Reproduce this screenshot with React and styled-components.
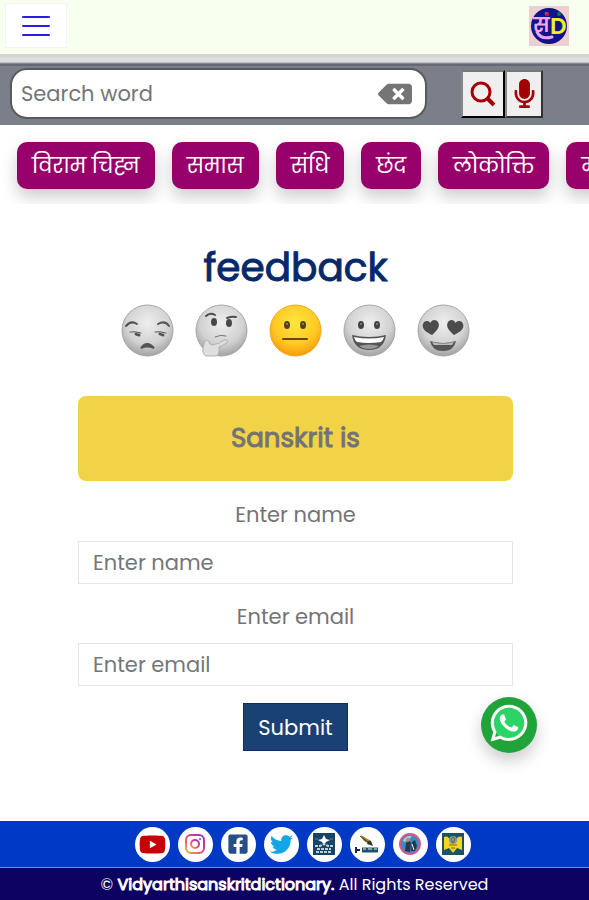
import React, { useState } from 'react'
import styled, { createGlobalStyle } from 'styled-components'
import { FaBackspace, FaMicrophone, FaYoutube, FaFacebookSquare, FaTwitter, FaWhatsapp } from 'react-icons/fa'

const GlobalStyle = createGlobalStyle`
* { box-sizing: border-box; }
body {
  margin: 0;
  background: #fff;
  font-family: Poppins, Inter, "Noto Sans", sans-serif;
  color: #737376;
}
button, input { font-family: inherit; }
`

const Page = styled.div`
display: flex;
flex-direction: column;
min-height: 100vh;
overflow: hidden;
`
const Header = styled.header`
display: flex;
justify-content: space-between;
align-items: flex-start;
height: 54px;
padding: 3px 20px 0 5px;
background: #f7ffee;
`
const MenuButton = styled.button`
display: flex;
align-items: center;
justify-content: center;
width: 62px;
height: 45px;
padding: 0;
border: 1px solid #f3f3f6;
background: #fff;
`
const LogoLink = styled.a`
display: block;
height: 40px;
margin-top: 3px;
`
const HeaderShadow = styled.div`
height: 10px;
background: linear-gradient(#cdd1cc, #dde1e1 50%, #d9dee0 80%, #666a75);
`
const SearchBar = styled.form`
display: flex;
align-items: center;
gap: 34px;
height: 61px;
padding: 0 46px 4px 10px;
background: #7b7f8a;
border-top: 2px solid #666973;
`
const SearchBox = styled.div`
display: flex;
align-items: center;
flex: 1;
min-width: 0;
height: 51px;
padding: 0 13px 0 9px;
border: 2px solid #5a5a5a;
border-radius: 17px;
background: #fff;
`
const SearchInput = styled.input`
flex: 1;
min-width: 0;
padding: 0;
border: 0;
outline: 0;
background: none;
font-size: 21px;
&::placeholder { color: #757575; opacity: 1; }
`
const ClearButton = styled.button`
display: flex;
padding: 0;
border: 0;
background: none;
color: #757575;
`
const SearchButtons = styled.div`
display: flex;
flex: none;
`
const ToolButton = styled.button`
display: flex;
align-items: center;
justify-content: center;
width: ${(props) => (props.$dark ? '44px' : '38px')};
height: 48px;
padding: 0;
border: 2px outset ${(props) => (props.$dark ? '#000' : '#858585')};
border-top-color: #777;
border-left-color: #888;
background: #efefef;
color: #a30008;
`
const Chips = styled.nav`
display: flex;
gap: 17px;
height: 79px;
padding: 17px 17px 0;
overflow: hidden;
`
const Chip = styled.a`
flex: none;
height: 47px;
padding: 0 15px;
border-radius: 10px;
background: #97006a;
box-shadow: 0 8px 16px rgba(0, 0, 0, 0.2);
color: #fff;
font-size: 21px;
line-height: 47px;
text-decoration: none;
white-space: nowrap;
`
const Feedback = styled.main`
display: flex;
flex-direction: column;
align-items: center;
flex: 1;
margin: 0 76px 0 78px;
padding-top: 36px;
`
const Title = styled.h1`
margin: 0;
font-size: 39px;
font-weight: 400;
line-height: 56px;
-webkit-text-stroke: 1px;
color: #05296b;
`
const Faces = styled.div`
display: flex;
gap: 21px;
margin-top: 8px;
`
const FaceButton = styled.button`
display: block;
width: 53px;
height: 53px;
padding: 0;
border: 0;
background: none;
filter: ${(props) => (props.$active ? 'none' : 'grayscale(1)')};
`
const Banner = styled.div`
width: 100%;
margin-top: 39px;
border-radius: 8px;
background: #f2d347;
font-size: 26px;
-webkit-text-stroke: 1px;
line-height: 85px;
text-align: center;
`
const FeedbackForm = styled.form`
display: flex;
flex-direction: column;
align-items: center;
width: 100%;
padding-top: 9px;
`
const Label = styled.label`
padding-top: 9px;
font-size: 21px;
line-height: 32px;
`
const Field = styled.input`
width: 100%;
height: 43px;
margin: 10px 0 8px;
padding: 0 14px;
border: 1px solid #e4e5e7;
outline: 0;
font-size: 21px;
&::placeholder { color: #737679; opacity: 1; }
`
const SubmitButton = styled.button`
height: 48px;
margin-top: 9px;
padding: 0 14px;
border: 1px solid #0c2f6c;
background: #194173;
color: #fff;
font-size: 21px;
`
const WhatsappLink = styled.a`
position: fixed;
right: 52px;
bottom: 147px;
width: 56px;
height: 56px;
border-radius: 50%;
background: #20a43a;
box-shadow: 0 8px 16px rgba(0, 0, 0, 0.2);
`
const Social = styled.div`
display: flex;
justify-content: center;
align-items: center;
gap: 8px;
height: 46px;
margin-left: 16px;
`
const SocialLink = styled.a`
display: flex;
align-items: center;
justify-content: center;
width: 35px;
height: 35px;
border-radius: 50%;
background: #fff;
color: ${(props) => props.$color};
`
const Footer = styled.footer`
background: #0039c6;
`
const Copyright = styled.div`
height: 33px;
border-top: 1px solid #8b7fd0;
background: #0c0061;
color: #fff;
font-size: 16px;
line-height: 33px;
text-align: center;
b { font-weight: 400; -webkit-text-stroke: 1px; }
`

const Logo = () => (
  <svg width="40" height="40" viewBox="0 0 40 40">
    <rect width="40" height="40" fill="#edcfd2" />
    <circle cx="20" cy="20" r="18" fill="#10138a" />
    <path d="M8 26q4 8 15 5" stroke="#e5a5ee" strokeWidth="3" fill="none" strokeLinecap="round" />
    <text x="4" y="26" fontSize="20" fontWeight="600" fill="#f2a6f0">सं</text>
    <text x="21" y="28" fontSize="23" fontWeight="600" fill="#f0ef25">D</text>
    <circle cx="18" cy="8" r="2" fill="#d51d2b" />
    <circle cx="30" cy="8" r="2" fill="#087b3e" />
  </svg>
)

const SearchIcon = () => (
  <svg width="28" height="28" viewBox="0 0 28 28" fill="none" stroke="#a30008">
    <circle cx="12" cy="12" r="9" strokeWidth="3" />
    <path d="M18 18l7 7" strokeWidth="4" />
  </svg>
)

const Heart = ({ x }) => (
  <path transform={`translate(${x} 23) rotate(${x < 26 ? -8 : 8})`} d="M0 8C-4 5-9 2-8-3c1-4 6-5 8-1 2-4 7-3 8 1 1 5-4 8-8 11z" fill="#4b4b4b" />
)

const Eyes = ({ y = 21 }) => (
  <g fill="#50401c">
    <ellipse cx="18" cy={y} rx="3" ry="4" />
    <ellipse cx="34" cy={y} rx="3" ry="4" />
    <circle cx="18" cy={y - 1} r="1" fill="#a58a50" />
    <circle cx="34" cy={y - 1} r="1" fill="#a58a50" />
  </g>
)

const features = {
  unamused: (
    <g fill="none" stroke="#555" strokeWidth="2" strokeLinecap="round">
      <path d="M5 22q5-6 11-2M37 20q7-4 11 2" />
      <path d="M9 28q5-1 11 1M34 28q5-1 11 1" strokeWidth="1" />
      <path d="M15 30q1 1 3 1M39 30q2 1 3 1" strokeWidth="3" />
      <path d="M20 44q6-8 13 0q-7-3-13 0z" fill="#555" />
    </g>
  ),
  thinking: (
    <g>
      <g fill="none" stroke="#4e4e4e" strokeWidth="2" strokeLinecap="round">
        <path d="M11 12q4-4 9-1M32 14q5-2 9-1" />
        <path d="M20 33q6-3 11-1" stroke="#777" strokeWidth="1" />
      </g>
      <g fill="#484848"><ellipse cx="19" cy="18" rx="3" ry="4" /><ellipse cx="34" cy="19" rx="3" ry="4" /></g>
      <path d="M9 40q0-4 3-4q2 0 3 4l2 1q7-1 12-5q5-1 3 3l-8 4q1 9-4 9h-9q-4-2-3-8z" fill="#dedede" stroke="#b0b0b0" />
    </g>
  ),
  neutral: (
    <g><Eyes /><path d="M14 35h24" stroke="#684713" strokeWidth="2" strokeLinecap="round" /></g>
  ),
  grinning: (
    <g>
      <Eyes />
      <path d="M9 31q17 4 34 0q-2 15-17 15T9 31z" fill="#555" />
      <path d="M11 33q15 3 30 0q-1 4-3 5q-12 2-24 0q-2-1-3-5z" fill="#fff" />
      <path d="M16 42q10-3 20 0q-4 3-10 3t-10-3z" fill="#999" />
    </g>
  ),
  hearts: (
    <g><Heart x={14} /><Heart x={38} /><path d="M13 37q13 4 26 0q-2 10-13 10T13 37z" fill="#555" /><path d="M15 38q11 3 22 0l-2 3H17z" fill="#bbb" /></g>
  ),
}

const Face = ({ kind, active }) => (
  <svg width="53" height="53" viewBox="0 0 53 53">
    <defs>
      <radialGradient id={`face-${kind}`} cx="50%" cy="35%" r="65%">
        <stop offset="0" stopColor={active ? '#ffe640' : '#eee'} />
        <stop offset="0.65" stopColor={active ? '#ffc923' : '#d2d2d2'} />
        <stop offset="1" stopColor={active ? '#f79a0c' : '#a2a2a2'} />
      </radialGradient>
    </defs>
    <circle cx="26.5" cy="26.5" r="25.5" fill={`url(#face-${kind})`} stroke={active ? '#f5a623' : '#a5a5a5'} />
    {features[kind]}
  </svg>
)

const InstagramIcon = () => (
  <svg width="22" height="22" viewBox="0 0 22 22">
    <defs>
      <linearGradient id="insta" x1="0" y1="1" x2="1" y2="0">
        <stop offset="0" stopColor="#fbb03f" />
        <stop offset="0.5" stopColor="#e9416f" />
        <stop offset="1" stopColor="#8c35d2" />
      </linearGradient>
    </defs>
    <g fill="none" stroke="url(#insta)" strokeWidth="2">
      <rect x="2" y="2" width="18" height="18" rx="5" />
      <circle cx="11" cy="11" r="4" />
    </g>
    <circle cx="16" cy="6" r="1" fill="#9c38c8" />
  </svg>
)

const TempleIcon = () => (
  <svg width="22" height="22" viewBox="0 0 22 22">
    <rect width="22" height="22" fill="#164366" />
    <path d="M11 2l2 4 4 1-4 2-2 3-2-3-4-2 4-1z" fill="#fff" />
    <path d="M2 13h5l4-2 4 2h5M4 16h14M3 19h16" stroke="#b9d3d5" strokeWidth="2" strokeDasharray="3 1" fill="none" />
    <path d="M2 6h3M17 6h3" stroke="#5b8da0" />
  </svg>
)

const HornIcon = () => (
  <svg width="24" height="22" viewBox="0 0 24 22">
    <path d="M6 2q1 7 8 8l2-2z" fill="#a38a29" />
    <path d="M5 3l9 7" stroke="#333" />
    <path d="M12 11q1-4 4-3l2 5z" fill="#333" />
    <path d="M1 14v6M1 17h4" stroke="#122c45" strokeWidth="2" />
    <path d="M7 17h16" stroke="#1e526c" strokeWidth="5" />
    <path d="M8 16h3m2 0h4m2 0h3" stroke="#e5eff1" />
  </svg>
)

const GlobeIcon = () => (
  <svg width="24" height="24" viewBox="0 0 24 24">
    <circle cx="12" cy="12" r="10" fill="#368bc0" stroke="#d4568a" strokeWidth="2" />
    <path d="M5 8q4-5 9-4l-3 4-5 2z" fill="#a8c9d5" />
    <path d="M7 19l1-8 3-3 2 3-1 9zM13 19l1-9 3-2 2 6-2 5z" fill="#26364b" />
    <circle cx="10" cy="8" r="2" fill="#b98965" />
    <path d="M14 12l2 6" stroke="#eee" />
  </svg>
)

const CrestIcon = () => (
  <svg width="22" height="22" viewBox="0 0 22 22">
    <rect width="22" height="22" fill="#1a5367" />
    <path d="M2 4q4-2 6 3h6q2-5 6-3v13l-5-2-4 5-4-5-5 2z" fill="#f7d51d" />
    <circle cx="11" cy="7" r="4" fill="#8298a2" />
    <path d="M9 6l2-2 2 2-2 4zM7 12h8M9 15h4" stroke="#6e6a26" fill="none" />
  </svg>
)

const topics = ['विराम चिह्न', 'समास', 'संधि', 'छंद', 'लोकोक्ति', 'मुहावरे']
const moods = ['unamused', 'thinking', 'neutral', 'grinning', 'hearts']
const socials = [
  { name: 'Youtube', color: '#c90005', icon: <FaYoutube size={27} /> },
  { name: 'Instagram', icon: <InstagramIcon /> },
  { name: 'Facebook', color: '#294e85', icon: <FaFacebookSquare size={22} /> },
  { name: 'Twitter', color: '#12a5e8', icon: <FaTwitter size={23} /> },
  { name: 'Temple', icon: <TempleIcon /> },
  { name: 'Horn', icon: <HornIcon /> },
  { name: 'Globe', icon: <GlobeIcon /> },
  { name: 'Crest', icon: <CrestIcon /> },
]

const App = () => {
  const [word, setword] = useState('')
  const [mood, setmood] = useState('neutral')
  const [name, setname] = useState('')
  const [email, setemail] = useState('')

  return (
    <>
      <GlobalStyle />
      <Page>
        <Header>
          <MenuButton aria-label="Menu">
            <svg width="28" height="24" viewBox="0 0 28 24" stroke="#2a1ce0" strokeWidth="2">
              <path d="M1 3h26M1 12h26M1 21h26" strokeLinecap="round" />
            </svg>
          </MenuButton>
          <LogoLink href="#home" aria-label="Home"><Logo /></LogoLink>
        </Header>
        <HeaderShadow />
        <SearchBar onSubmit={(event) => event.preventDefault()}>
          <SearchBox>
            <SearchInput aria-label="Search word" placeholder="Search word" value={word} onChange={(event) => setword(event.target.value)} />
            <ClearButton type="button" aria-label="Clear" onClick={() => setword('')}><FaBackspace size={34} /></ClearButton>
          </SearchBox>
          <SearchButtons>
            <ToolButton $dark aria-label="Search"><SearchIcon /></ToolButton>
            <ToolButton type="button" aria-label="Voice search"><FaMicrophone size={29} /></ToolButton>
          </SearchButtons>
        </SearchBar>
        <Chips>
          {topics.map((topic) => <Chip key={topic} href="#topic">{topic}</Chip>)}
        </Chips>

        <Feedback>
          <Title>feedback</Title>
          <Faces>
            {moods.map((kind) => (
              <FaceButton key={kind} aria-label={kind} $active={mood === kind} onClick={() => setmood(kind)}>
                <Face kind={kind} active={mood === kind} />
              </FaceButton>
            ))}
          </Faces>
          <Banner>Sanskrit is</Banner>
          <FeedbackForm onSubmit={(event) => event.preventDefault()}>
            <Label htmlFor="name">Enter name</Label>
            <Field id="name" placeholder="Enter name" value={name} onChange={(event) => setname(event.target.value)} />
            <Label htmlFor="email">Enter email</Label>
            <Field id="email" type="email" placeholder="Enter email" value={email} onChange={(event) => setemail(event.target.value)} />
            <SubmitButton>Submit</SubmitButton>
          </FeedbackForm>
        </Feedback>

        <Footer>
          <Social>
            {socials.map((item) => (
              <SocialLink key={item.name} href="#social" aria-label={item.name} $color={item.color}>{item.icon}</SocialLink>
            ))}
          </Social>
          <Copyright>© <b>Vidyarthisanskritdictionary.</b> All Rights Reserved</Copyright>
        </Footer>
      </Page>
      <WhatsappLink href="#whatsapp" aria-label="WhatsApp">
        <svg width="56" height="56" viewBox="0 0 56 56">
          <circle cx="28" cy="27" r="16" fill="#2bd466" />
          <FaWhatsapp x="7" y="5" size={42} color="#fff" />
        </svg>
      </WhatsappLink>
    </>
  )
}

export default App
